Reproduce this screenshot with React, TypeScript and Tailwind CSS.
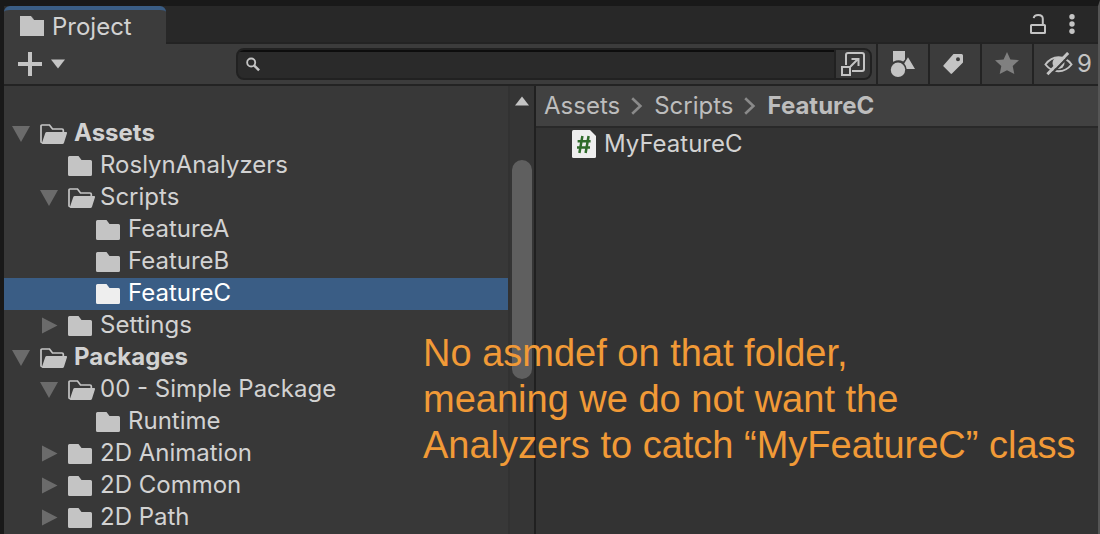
import type { ReactNode } from 'react';

type Node = {
  name: string;
  depth: 0 | 1 | 2;
  state: 'open' | 'closed' | 'leaf';
  selected?: boolean;
};

const nodes: Node[] = [
  { name: 'Assets', depth: 0, state: 'open' },
  { name: 'RoslynAnalyzers', depth: 1, state: 'leaf' },
  { name: 'Scripts', depth: 1, state: 'open' },
  { name: 'FeatureA', depth: 2, state: 'leaf' },
  { name: 'FeatureB', depth: 2, state: 'leaf' },
  { name: 'FeatureC', depth: 2, state: 'leaf', selected: true },
  { name: 'Settings', depth: 1, state: 'closed' },
  { name: 'Packages', depth: 0, state: 'open' },
  { name: '00 - Simple Package', depth: 1, state: 'open' },
  { name: 'Runtime', depth: 2, state: 'leaf' },
  { name: '2D Animation', depth: 1, state: 'closed' },
  { name: '2D Common', depth: 1, state: 'closed' },
  { name: '2D Path', depth: 1, state: 'closed' },
];

const indents = { 0: 'pl-2', 1: 'pl-9', 2: 'pl-16' };

function Folder() {
  return (
    <svg width="24" height="20" viewBox="0 0 24 20" fill="currentColor" aria-hidden="true">
      <path d="M1.5 0H10.5L13.5 4H22.5Q24 4 24 5.5V18.5Q24 20 22.5 20H1.5Q0 20 0 18.5V1.5Q0 0 1.5 0Z" />
    </svg>
  );
}

function OpenFolder() {
  return (
    <svg width="28" height="20" viewBox="0 0 28 20" aria-hidden="true">
      <path
        d="M2 19L1 18V2Q1 1 2 1H9.5L12.5 5H22Q23.3 5 23.3 6.3V9"
        fill="none"
        stroke="currentColor"
        strokeWidth="1.7"
      />
      <path
        d="M6.8 8H26Q27.4 8 27 9.3L24 18.8Q23.6 20 22.4 20H2.5Q1.6 20 2 18.8L5.2 9.2Q5.6 8 6.8 8Z"
        fill="currentColor"
      />
    </svg>
  );
}

function Foldout({ open }: { open: boolean }) {
  return (
    <svg width="18" height="18" viewBox="0 0 18 18" fill="#6b6b6b" aria-hidden="true">
      {open ? <path d="M0 1H18L9 17Z" /> : <path d="M2 .5L17.5 8.5L2 16.5Z" />}
    </svg>
  );
}

function TreeRow({ node }: { node: Node }) {
  return (
    <li>
      <button
        className={`flex h-8 w-full items-center text-left ${indents[node.depth]} ${
          node.selected ? 'bg-[#3a5d85] text-white' : 'text-[#d2d2d2]'
        }`}
      >
        <span className="w-7 shrink-0">{node.state !== 'leaf' && <Foldout open={node.state === 'open'} />}</span>
        <span
          className={`shrink-0 ${node.depth === 0 ? 'w-[34px]' : 'w-8'} ${
            node.selected ? 'text-[#eeeeee]' : 'text-[#c4c4c4]'
          }`}
        >
          {node.state === 'open' ? <OpenFolder /> : <Folder />}
        </span>
        <span className={`pb-0.5 whitespace-nowrap ${node.depth === 0 ? 'font-bold' : ''}`}>{node.name}</span>
      </button>
    </li>
  );
}

function ToolButton({ label, children }: { label: string; children: ReactNode }) {
  return (
    <button
      aria-label={label}
      className="flex h-full w-[52px] shrink-0 items-center justify-center border-l-2 border-[#232323] text-[#c4c4c4]"
    >
      {children}
    </button>
  );
}

function Chevron() {
  return (
    <svg width="12" height="18" viewBox="0 0 12 18" fill="none" stroke="#8a8a8a" strokeWidth="2.6" aria-hidden="true">
      <path d="M1.2 1.2L9.4 9L1.2 16.8" />
    </svg>
  );
}

export default function App() {
  return (
    <div className="relative flex h-screen flex-col overflow-hidden border-t-[6px] border-r-2 border-l-4 border-t-[#191919] border-r-[#555555] border-l-[#191919] bg-[#333333] font-['Inter',sans-serif] text-2xl leading-7 text-[#d2d2d2]">
      <header className="flex h-[38px] shrink-0 items-stretch justify-between bg-[#282828]">
        <button className="flex w-[162px] items-center gap-2 rounded-t-md border-t-4 border-[#3a5d85] bg-[#3c3c3c] pl-4">
          <span className="pb-0.5 text-[#c4c4c4]">
            <svg width="24" height="20" viewBox="0 0 24 20" fill="currentColor" aria-hidden="true">
              <path d="M0 0H11L14 4H24V20H0Z" />
              <path d="M12 0L14 4H24V6H14Z" opacity=".5" />
            </svg>
          </span>
          <span>Project</span>
        </button>
        <div className="flex flex-1 items-start justify-end gap-5 border-b-2 border-[#232323] pt-2 pr-5 text-[#c4c4c4]">
          <button aria-label="Lock">
            <svg width="16" height="20" viewBox="0 0 16 20" fill="none" stroke="currentColor" strokeWidth="2" aria-hidden="true">
              <rect x="1" y="11" width="14" height="8" rx=".6" />
              <path d="M3.7 4.2C4 2.2 5.5 1 8.2 1S12.8 2.3 12.8 4.8V11" />
            </svg>
          </button>
          <button aria-label="More options">
            <svg width="12" height="20" viewBox="0 0 12 20" fill="currentColor" aria-hidden="true">
              <circle cx="6" cy="2.7" r="2.7" />
              <circle cx="6" cy="10" r="2.7" />
              <circle cx="6" cy="17.3" r="2.7" />
            </svg>
          </button>
        </div>
      </header>

      <div className="flex h-[42px] shrink-0 items-center border-b-2 border-[#232323] bg-[#3c3c3c]">
        <button aria-label="Create" className="ml-3.5 flex shrink-0 items-center gap-2 text-[#c4c4c4]">
          <svg width="24" height="24" viewBox="0 0 24 24" fill="currentColor" aria-hidden="true">
            <path d="M10 0H14V10H24V14H14V24H10V14H0V10H10Z" />
          </svg>
          <svg width="16" height="10" viewBox="0 0 16 10" fill="currentColor" aria-hidden="true">
            <path d="M1 .5H15L8 9.5Z" />
          </svg>
        </button>
        <div className="mr-1 ml-[170px] flex h-8 flex-1 items-stretch overflow-hidden rounded-lg border-2 border-[#212121] bg-[#2a2a2a]">
          <label className="flex flex-1 items-center border-t-2 border-[#0d0d0d] pl-2">
            <svg width="16" height="16" viewBox="0 0 16 16" fill="none" stroke="#c4c4c4" aria-hidden="true">
              <circle cx="5.4" cy="5.4" r="4.2" strokeWidth="1.9" />
              <path d="M8.6 8.6L13.6 13.6" strokeWidth="2.6" />
            </svg>
            <input aria-label="Search assets" className="ml-2 w-full min-w-0 bg-transparent text-base outline-none" />
          </label>
          <button
            aria-label="Open in search window"
            className="flex w-9 shrink-0 items-center justify-center border-l-2 border-[#212121] bg-[#383838]"
          >
            <svg width="24" height="24" viewBox="0 0 24 24" fill="none" stroke="#c4c4c4" strokeWidth="2" aria-hidden="true">
              <path d="M5 13V3Q5 1 7 1H21Q23 1 23 3V17Q23 19 21 19H11" />
              <rect x="1" y="15" width="8" height="8" />
              <path d="M9.5 14.5L17 7M10.5 7H17.5V14" />
            </svg>
          </button>
        </div>
        <ToolButton label="Search by type">
          <svg width="26" height="26" viewBox="0 0 26 26" fill="currentColor" aria-hidden="true">
            <path d="M3 0H15V8.5L13.2 10.4Q8.5 8 3.8 10.4L3 10.8Z" />
            <circle cx="8" cy="18.8" r="7.2" />
            <path d="M18 6.2L25 18H16.6Q16 14.5 14.2 12.6Z" />
          </svg>
        </ToolButton>
        <ToolButton label="Search by label">
          <svg width="26" height="20" viewBox="0 0 26 20" fill="currentColor" aria-hidden="true">
            <path
              fillRule="evenodd"
              d="M11.5 0H19.5Q21 0 21 1.5V8.5L10 19.6Q9.3 20.2 8.6 19.6L1.6 12.6Q1 12 1.6 11.3ZM16 3.2A2 2 0 1 0 16 7.2A2 2 0 1 0 16 3.2Z"
            />
          </svg>
        </ToolButton>
        <ToolButton label="Favorites">
          <svg width="24" height="24" viewBox="0 0 24 24" fill="#808080" aria-hidden="true">
            <path d="M12 0L15.4 7.4L24 8.2L17.7 14L19.3 22L12 18.2L4.7 22L6.3 14L0 8.2L8.6 7.4Z" />
          </svg>
        </ToolButton>
        <button
          aria-label="9 hidden packages"
          className="flex h-full w-[66px] shrink-0 items-center gap-1 border-l-2 border-[#232323] pl-2.5 text-[#c4c4c4]"
        >
          <svg width="29" height="24" viewBox="0 0 30 24" fill="none" stroke="currentColor" aria-hidden="true">
            <path d="M1.5 12.5Q7 5 15 5T28.5 12.5Q23 19.5 15 19.5T1.5 12.5Z" strokeWidth="2" />
            <circle cx="15" cy="11" r="6.2" fill="currentColor" stroke="none" />
            <path d="M5.5 24.5L26.5 3" stroke="#3c3c3c" strokeWidth="2.4" />
            <path d="M3.5 22.5L25 .5" strokeWidth="3" />
          </svg>
          <span>9</span>
        </button>
      </div>

      <main className="flex min-h-0 flex-1">
        <nav aria-label="Folders" className="w-[504px] shrink-0 overflow-hidden bg-[#383838] pt-8">
          <ul>
            {nodes.map((node) => (
              <TreeRow key={node.name} node={node} />
            ))}
          </ul>
        </nav>
        <div className="flex w-7 shrink-0 flex-col items-center border-r-2 border-l-2 border-r-[#202020] border-l-[#323232] bg-[#353535] pt-2.5">
          <svg width="16" height="10" viewBox="0 0 16 10" fill="#c4c4c4" aria-hidden="true">
            <path d="M1 9.5H15L8 .5Z" />
          </svg>
          <div className="mt-[54px] h-[219px] w-5 rounded-full bg-[#5f5f5f]" />
        </div>
        <section className="min-w-0 flex-1">
          <nav
            aria-label="Breadcrumb"
            className="flex h-[42px] items-center gap-[11px] border-b-2 border-[#292929] bg-[#414141] pl-2 text-[#bdbdbd]"
          >
            <a href="#assets">Assets</a>
            <Chevron />
            <a href="#scripts">Scripts</a>
            <Chevron />
            <a href="#featurec" className="font-bold">FeatureC</a>
          </nav>
          <button className="flex h-8 w-full items-center gap-2 pl-9 text-left">
            <svg width="24" height="28" viewBox="0 0 24 28" aria-hidden="true">
              <path d="M1.5 0H18L24 6V26.5Q24 28 22.5 28H1.5Q0 28 0 26.5V1.5Q0 0 1.5 0Z" fill="#eeeeee" />
              <path d="M10.4 6L7.4 23M16.6 6L13.6 23M5.6 11.2H18.6M5 17.6H18" fill="none" stroke="#2f6b2a" strokeWidth="2.5" />
            </svg>
            <span>MyFeatureC</span>
          </button>
        </section>
      </main>

      <p className="pointer-events-none absolute top-[324px] left-[419px] font-['Liberation_Sans',sans-serif] text-[38px] leading-[46px] whitespace-nowrap text-[#f19a37]">
        No asmdef on that folder,
        <br />
        meaning we do not want the
        <br />
        Analyzers to catch “MyFeatureC” class
      </p>
    </div>
  );
}
